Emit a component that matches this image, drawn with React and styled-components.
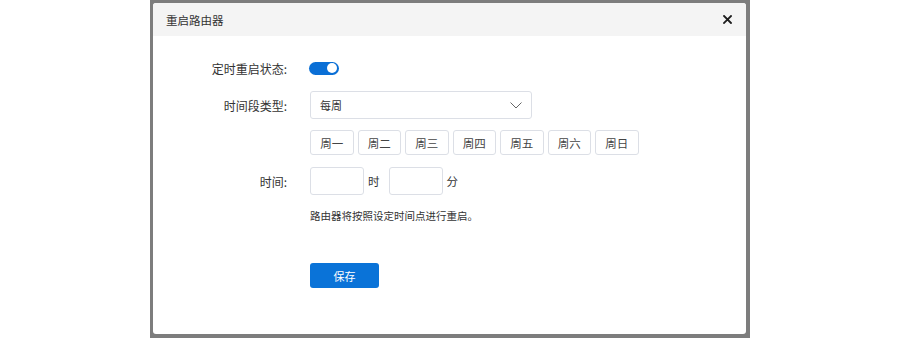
import React, { useState } from "react";
import styled, { createGlobalStyle } from "styled-components";

const GlobalStyle = createGlobalStyle`
  html, body {
    margin: 0;
    padding: 0;
    background: #ffffff;
  }
  body {
    font-family: "Noto Sans CJK SC", "Noto Sans", "Liberation Sans", sans-serif;
    color: #333333;
  }
`;

const Page = styled.div`
  width: 900px;
  height: 338px;
  display: flex;
  justify-content: center;
`;

const Overlay = styled.div`
  width: 600px;
  height: 338px;
  box-sizing: border-box;
  padding: 3px 4px 4px 3px;
  background: #7d7d7d;
  display: flex;
`;

const Modal = styled.div`
  flex: 1;
  background: #ffffff;
  border-radius: 3px;
  overflow: hidden;
  display: flex;
  flex-direction: column;
`;

const Header = styled.div`
  height: 33px;
  flex-shrink: 0;
  background: #f4f4f4;
  display: flex;
  align-items: center;
  justify-content: space-between;
  padding: 0 14px 0 13px;
`;

const Title = styled.div`
  font-size: 11.5px;
  color: #333333;
`;

const CloseButton = styled.button`
  border: none;
  background: transparent;
  padding: 0;
  width: 10px;
  height: 10px;
  display: flex;
  align-items: center;
  justify-content: center;
  cursor: pointer;
  color: #1d1d1d;
`;

const Body = styled.div`
  display: flex;
  flex-direction: column;
`;

const Row = styled.div`
  display: grid;
  grid-template-columns: 134px 1fr;
  column-gap: 23px;
  align-items: center;
  height: ${(p) => p.$h}px;
  margin-top: ${(p) => p.$mt}px;
`;

const Label = styled.div`
  text-align: right;
  font-size: 12px;
  color: #333333;
  white-space: nowrap;
`;

const Toggle = styled.button`
  width: 30px;
  height: 13px;
  border: none;
  border-radius: 7px;
  padding: 0 2px;
  background: ${(p) => (p.$on ? "#0a6fd6" : "#c8c8c8")};
  display: flex;
  align-items: center;
  justify-content: ${(p) => (p.$on ? "flex-end" : "flex-start")};
  cursor: pointer;
  margin-left: -1px;
`;

const Knob = styled.span`
  width: 10px;
  height: 10px;
  border-radius: 50%;
  background: #ffffff;
`;

const Select = styled.div`
  width: 222px;
  height: 28px;
  box-sizing: border-box;
  border: 1px solid #dcdfe6;
  border-radius: 3px;
  display: flex;
  align-items: center;
  justify-content: space-between;
  padding: 0 9px 0 9px;
  font-size: 11px;
  color: #333333;
`;

const DayList = styled.div`
  display: flex;
  gap: 4px;
`;

const DayButton = styled.button`
  width: 43.5px;
  height: 25px;
  box-sizing: border-box;
  border: 1px solid #dcdfe6;
  border-radius: 3px;
  background: ${(p) => (p.$active ? "#e8f1fc" : "#ffffff")};
  font-family: inherit;
  font-size: 11.5px;
  color: #444444;
  padding: 0;
  cursor: pointer;
`;

const TimeGroup = styled.div`
  display: flex;
  align-items: center;
`;

const TimeInput = styled.input`
  width: 54px;
  height: 28px;
  box-sizing: border-box;
  border: 1px solid #dcdfe6;
  border-radius: 3px;
  font-family: inherit;
  font-size: 12px;
  padding: 0 6px;
  outline: none;
`;

const Unit = styled.span`
  font-size: 11.5px;
  color: #333333;
  margin: 0 9px 0 4px;
`;

const Note = styled.div`
  grid-column: 2;
  font-size: 10.5px;
  color: #333333;
`;

const SaveButton = styled.button`
  grid-column: 2;
  width: 69px;
  height: 25px;
  border: none;
  border-radius: 3px;
  background: #0a73d8;
  color: #ffffff;
  font-family: inherit;
  font-size: 11px;
  cursor: pointer;
  padding: 0;
`;

const days = ["周一", "周二", "周三", "周四", "周五", "周六", "周日"];

export default function App() {
  const [on, setOn] = useState(true);
  const [active, setActive] = useState([]);
  const [hour, setHour] = useState("");
  const [minute, setMinute] = useState("");

  const toggleDay = (d) =>
    setActive((a) => (a.includes(d) ? a.filter((x) => x !== d) : [...a, d]));

  return (
    <Page>
      <GlobalStyle />
      <Overlay>
        <Modal>
          <Header>
            <Title>重启路由器</Title>
            <CloseButton aria-label="关闭">
              <svg width="9" height="9" viewBox="0 0 9 9">
                <path
                  d="M1 1 L8 8 M8 1 L1 8"
                  stroke="currentColor"
                  strokeWidth="1.8"
                  strokeLinecap="square"
                />
              </svg>
            </CloseButton>
          </Header>
          <Body>
            <Row $h={28} $mt={18}>
              <Label>定时重启状态:</Label>
              <div>
                <Toggle $on={on} onClick={() => setOn(!on)}>
                  <Knob />
                </Toggle>
              </div>
            </Row>
            <Row $h={28} $mt={9}>
              <Label>时间段类型:</Label>
              <Select>
                <span>每周</span>
                <svg width="12" height="7" viewBox="0 0 12 7">
                  <path d="M0.5 0.5 L6 6 L11.5 0.5" fill="none" stroke="#666" strokeWidth="1" />
                </svg>
              </Select>
            </Row>
            <Row $h={25} $mt={11}>
              <span />
              <DayList>
                {days.map((d) => (
                  <DayButton
                    key={d}
                    $active={active.includes(d)}
                    onClick={() => toggleDay(d)}
                  >
                    {d}
                  </DayButton>
                ))}
              </DayList>
            </Row>
            <Row $h={28} $mt={12}>
              <Label>时间:</Label>
              <TimeGroup>
                <TimeInput value={hour} onChange={(e) => setHour(e.target.value)} />
                <Unit>时</Unit>
                <TimeInput value={minute} onChange={(e) => setMinute(e.target.value)} />
                <Unit>分</Unit>
              </TimeGroup>
            </Row>
            <Row $h={16} $mt={12}>
              <Note>路由器将按照设定时间点进行重启。</Note>
            </Row>
            <Row $h={25} $mt={40}>
              <SaveButton>保存</SaveButton>
            </Row>
          </Body>
        </Modal>
      </Overlay>
    </Page>
  );
}
